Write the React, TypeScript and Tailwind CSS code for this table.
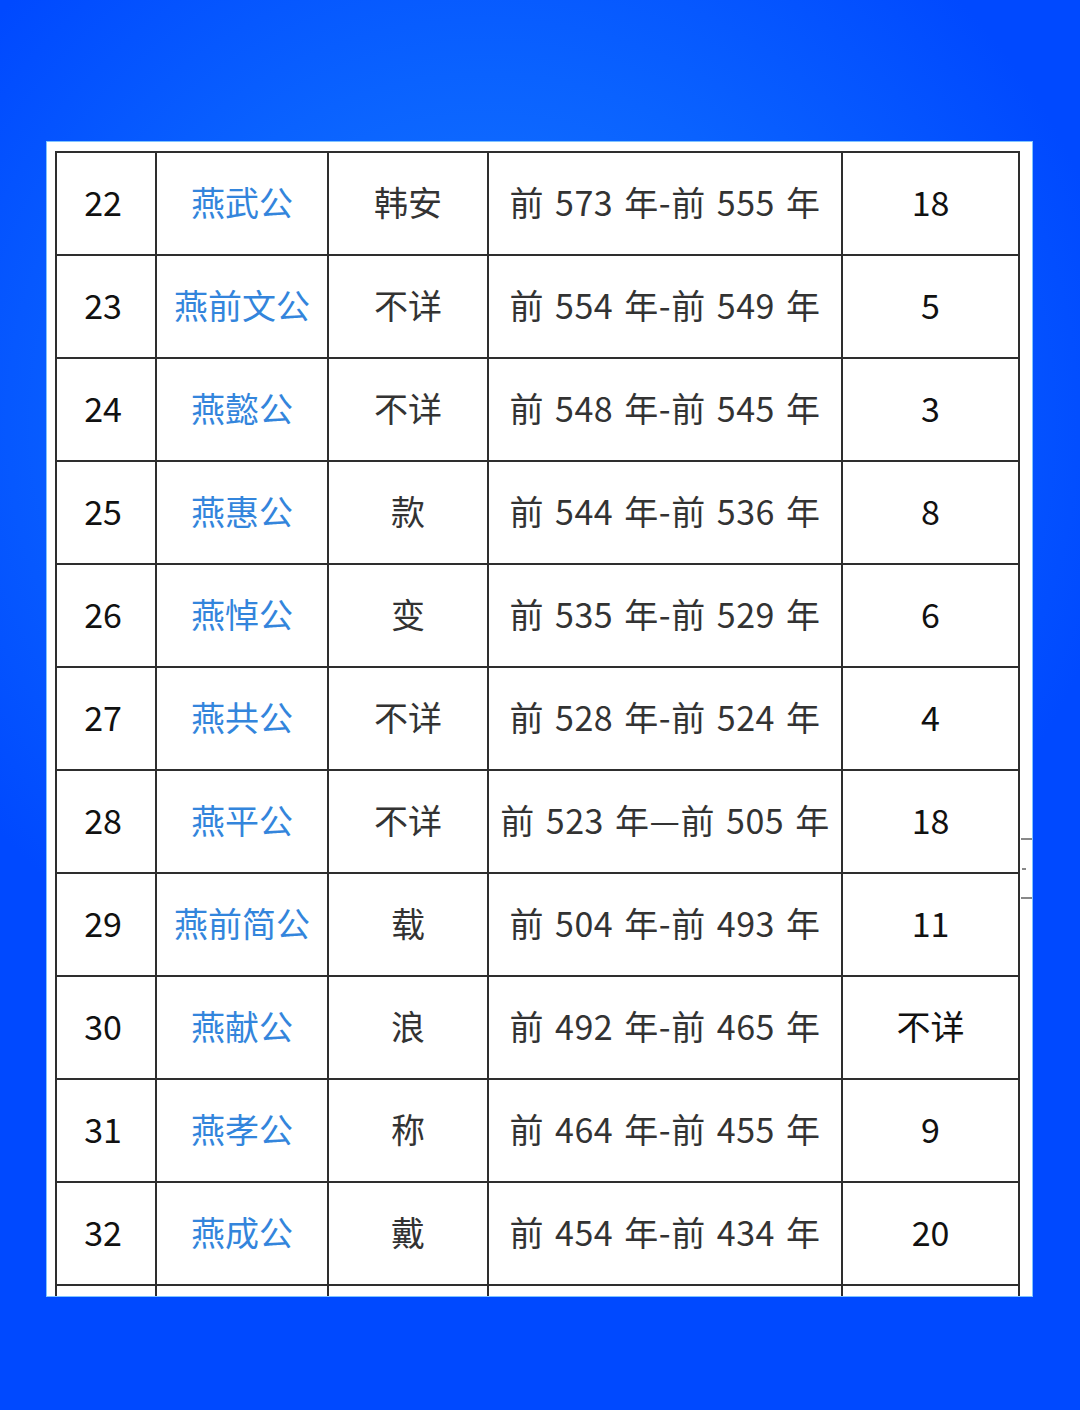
import React from "react";

type Row = { n: string; name: string; p: string; d: string; y: string };

const rows: Row[] = [
  { n: "22", name: "燕武公", p: "韩安", d: "前 573 年-前 555 年", y: "18" },
  { n: "23", name: "燕前文公", p: "不详", d: "前 554 年-前 549 年", y: "5" },
  { n: "24", name: "燕懿公", p: "不详", d: "前 548 年-前 545 年", y: "3" },
  { n: "25", name: "燕惠公", p: "款", d: "前 544 年-前 536 年", y: "8" },
  { n: "26", name: "燕悼公", p: "变", d: "前 535 年-前 529 年", y: "6" },
  { n: "27", name: "燕共公", p: "不详", d: "前 528 年-前 524 年", y: "4" },
  { n: "28", name: "燕平公", p: "不详", d: "前 523 年—前 505 年", y: "18" },
  { n: "29", name: "燕前简公", p: "载", d: "前 504 年-前 493 年", y: "11" },
  { n: "30", name: "燕献公", p: "浪", d: "前 492 年-前 465 年", y: "不详" },
  { n: "31", name: "燕孝公", p: "称", d: "前 464 年-前 455 年", y: "9" },
  { n: "32", name: "燕成公", p: "戴", d: "前 454 年-前 434 年", y: "20" },
  { n: "", name: "", p: "", d: "", y: "" },
];

const font = { fontFamily: '"Noto Sans CJK SC", "Noto Sans", sans-serif' };

const cell =
  "h-[103px] border-r-2 border-b-2 border-[#2e2e2e] flex items-center justify-center pb-[4px] text-[34px]";

export default function App() {
  return (
    <div
      className="w-full h-[1410px] overflow-hidden bg-[radial-gradient(ellipse_75%_55%_at_45%_30%,#1a7cff_0%,#0a62ff_45%,#0049ff_80%)] pt-[142px] pl-[47px]"
      style={font}
    >
      <div className="relative w-[985px] h-[1154px] bg-white overflow-hidden pt-[9px] pl-[8px] shadow-[0_0_0_1px_#7fc4ff]">
        <div className="grid grid-cols-[100px_172px_160px_354px_177px] w-[965px] border-l-2 border-t-2 border-[#2e2e2e]">
          {rows.map((r, i) => (
            <React.Fragment key={i}>
              <div className={`${cell} text-[#111] pr-[6px]`}>{r.n}</div>
              <div className={`${cell} text-[#3385dc]`}>{r.name}</div>
              <div className={`${cell} text-[#333]`}>{r.p}</div>
              <div className={`${cell} text-[#333] whitespace-pre tracking-[0.5px] [word-spacing:3px]`}>
                {r.d}
              </div>
              <div className={`${cell} text-[#111]`}>{r.y}</div>
            </React.Fragment>
          ))}
        </div>
        <div className="absolute left-[974px] top-[696px] w-[11px] h-[2px] bg-[#888]" />
        <div className="absolute left-[975px] top-[726px] w-[4px] h-[2px] bg-[#888]" />
        <div className="absolute left-[974px] top-[755px] w-[11px] h-[2px] bg-[#888]" />
      </div>
    </div>
  );
}
